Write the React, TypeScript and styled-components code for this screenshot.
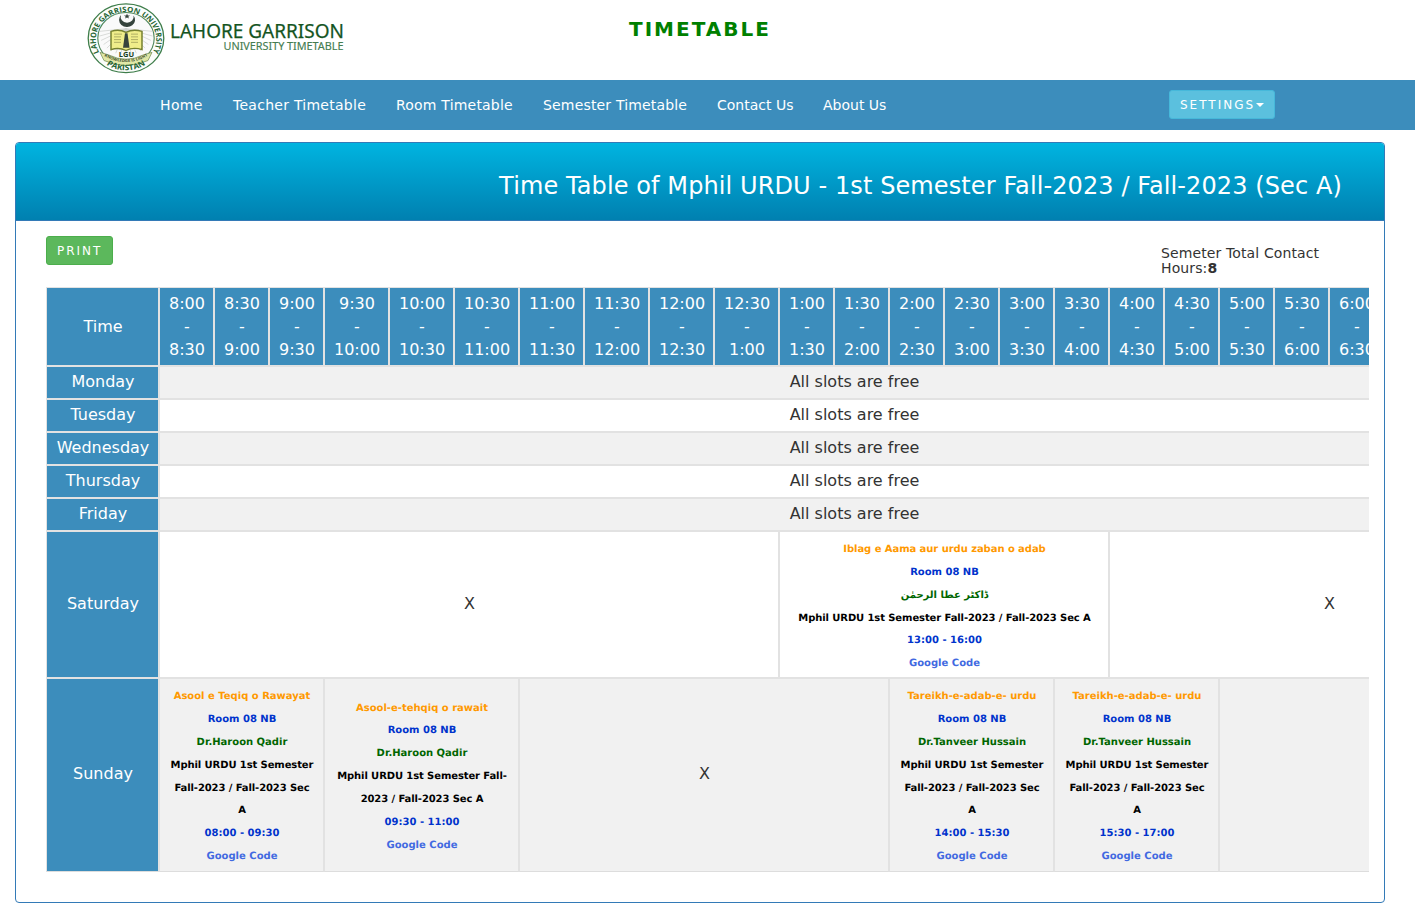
import React from "react";
import styled, { createGlobalStyle } from "styled-components";

const GlobalStyle = createGlobalStyle`
  * { box-sizing: border-box; }
  html { overflow: hidden; }
  body {
    margin: 0;
    background: #fff;
    color: #333;
    font: 14px/1.42857143 "DejaVu Sans", sans-serif;
  }
`;

const Masthead = styled.header`
  display: flex;
  height: 80px;
  padding-left: 85px;
`;

const LogoDrawing = styled.svg`
  flex: none;
  width: 260px;
  height: 78px;
  overflow: visible;
`;

const SiteTitle = styled.h1`
  margin: 16px 0 0 284px;
  color: #008000;
  font-size: 20px;
  line-height: 26px;
  letter-spacing: 2px;
`;

const NavBar = styled.nav`
  display: flex;
  align-items: flex-start;
  justify-content: space-between;
  height: 50px;
  padding: 10px 140px 0 160px;
  background: #3c8dbc;
`;

const NavLinks = styled.ul`
  display: flex;
  gap: 30px;
  margin: 5px 0 0;
  padding: 0;
  list-style: none;
`;

const NavItem = styled.li<{ $width: number }>`
  width: ${(p) => p.$width}px;
  white-space: nowrap;
`;

const NavLink = styled.a<{ $tracking: number }>`
  display: block;
  color: #fff;
  font-size: 14px;
  line-height: 20px;
  letter-spacing: ${(p) => p.$tracking}px;
  text-decoration: none;
`;

const Button = styled.button<{ $tone: "info" | "success"; $width: number }>`
  display: inline-flex;
  align-items: center;
  width: ${(p) => p.$width}px;
  height: 29px;
  padding: 0 10px;
  border: 1px solid ${(p) => (p.$tone === "info" ? "#46b8da" : "#4cae4c")};
  border-radius: 3px;
  background: ${(p) => (p.$tone === "info" ? "#5bc0de" : "#5cb85c")};
  color: #fff;
  font: 12px/18px "DejaVu Sans", sans-serif;
  letter-spacing: 2px;
`;

const Caret = styled.span`
  margin-left: 1px;
  border-top: 4px solid #fff;
  border-left: 4px solid transparent;
  border-right: 4px solid transparent;
`;

const Panel = styled.section`
  width: 1370px;
  height: 761px;
  margin: 12px 0 0 15px;
  border: 1px solid #337ab7;
  border-radius: 4px;
  overflow: hidden;
`;

const PanelHeading = styled.div`
  height: 78px;
  padding: 29px 42px 0 0;
  border-bottom: 1px solid #337ab7;
  background: linear-gradient(#00b4e0, #0080b0);
  color: #fff;
  text-align: right;
`;

const PanelTitle = styled.h2`
  margin: 0;
  font-size: 24px;
  font-weight: 400;
  line-height: 28px;
  letter-spacing: 0.1px;
`;

const PanelBody = styled.div`
  padding: 15px 15px 0 30px;
`;

const Toolbar = styled.div`
  display: flex;
  justify-content: space-between;
  align-items: flex-start;
  height: 51px;
`;

const ContactHours = styled.p`
  width: 208px;
  margin: 10px 0 0;
  padding-right: 30px;
  line-height: 15px;
  letter-spacing: 0.12px;
`;

const TableScroller = styled.div`
  height: 585px;
  overflow: hidden;
`;

const Schedule = styled.table`
  width: 1503px;
  border-collapse: separate;
  border-spacing: 0;
  table-layout: fixed;
  font-size: 16px;
  line-height: 1.42857143;
  text-align: center;
`;

const Column = styled.col<{ $width: number }>`
  width: ${(p) => p.$width}px;
`;

const HeadCell = styled.th`
  padding: 4px 8px 4px 9px;
  border: 1px solid #e2e2e2;
  background: #3c8dbc;
  color: #fff;
  font-weight: 400;
  white-space: nowrap;
`;

const HeadRow = styled.tr`
  height: 79px;

  ${HeadCell} {
    padding-top: 4.6px;
    padding-bottom: 3.4px;
  }
`;

const SlotCell = styled.td`
  padding: 4px 8.5px 4px 9.5px;
  border: 1px solid #e2e2e2;
`;

const DayRow = styled.tr<{ $striped: boolean; $height: number }>`
  height: ${(p) => p.$height}px;
  background: ${(p) => (p.$striped ? "#f1f1f1" : "#fff")};

  &:last-child > * {
    padding-bottom: 5px;
    border-bottom-color: #ddd;
  }
`;

const Detail = styled.span<{ $color: string; $tracking?: number }>`
  color: ${(p) => p.$color};
  font-size: 10px;
  font-weight: 700;
  letter-spacing: ${(p) => p.$tracking ?? 0}px;
  text-rendering: geometricPrecision;
`;

type Lecture = { course: string; teacher: string; time: string };
type Slot = { span: number; text?: string; lecture?: Lecture };

const marks = [
  "8:00", "8:30", "9:00", "9:30", "10:00", "10:30", "11:00", "11:30", "12:00", "12:30",
  "1:00", "1:30", "2:00", "2:30", "3:00", "3:30", "4:00", "4:30", "5:00", "5:30",
  "6:00", "6:30", "7:00", "7:30", "8:00",
];
const periods = marks.slice(0, -1).map((start, i) => ({ start, end: marks[i + 1] }));

const free: Slot[] = [{ span: 24, text: "All slots are free" }];

const days: { name: string; height: number; slots: Slot[] }[] = [
  { name: "Monday", height: 33, slots: free },
  { name: "Tuesday", height: 33, slots: free },
  { name: "Wednesday", height: 33, slots: free },
  { name: "Thursday", height: 33, slots: free },
  { name: "Friday", height: 33, slots: free },
  {
    name: "Saturday",
    height: 147,
    slots: [
      { span: 10, text: "X" },
      { span: 6, lecture: { course: "Iblag e Aama aur urdu zaban o adab", teacher: "ڈاکٹر عطا الرحمٰن", time: "13:00 - 16:00" } },
      { span: 8, text: "X" },
    ],
  },
  {
    name: "Sunday",
    height: 194,
    slots: [
      { span: 3, lecture: { course: "Asool e Teqiq o Rawayat", teacher: "Dr.Haroon Qadir", time: "08:00 - 09:30" } },
      { span: 3, lecture: { course: "Asool-e-tehqiq o rawait", teacher: "Dr.Haroon Qadir", time: "09:30 - 11:00" } },
      { span: 6, text: "X" },
      { span: 3, lecture: { course: "Tareikh-e-adab-e- urdu", teacher: "Dr.Tanveer Hussain", time: "14:00 - 15:30" } },
      { span: 3, lecture: { course: "Tareikh-e-adab-e- urdu", teacher: "Dr.Tanveer Hussain", time: "15:30 - 17:00" } },
      { span: 6, text: "X" },
    ],
  },
];

function LectureDetails({ course, teacher, time }: Lecture) {
  return (
    <>
      <Detail $color="#ff9900" $tracking={course.length > 30 ? -0.06 : 0}>{course}</Detail><br />
      <Detail $color="#0033cc">Room 08 NB</Detail><br />
      <Detail $color="#006600">{teacher}</Detail><br />
      <Detail $color="#000" $tracking={-0.1}>Mphil URDU 1st Semester Fall-2023 / Fall-2023 Sec A</Detail><br />
      <Detail $color="#0033cc">{time}</Detail><br />
      <Detail $color="#4169e1">Google Code</Detail>
    </>
  );
}

function Logo() {
  const rays = Array.from({ length: 17 }, (_, i) => {
    const a = (i / 16) * Math.PI;
    return `M41 28 L${(41 + 27 * Math.cos(a)).toFixed(1)} ${(31 + 26 * Math.sin(a)).toFixed(1)}`;
  }).join(" ");
  return (
    <LogoDrawing viewBox="0 0 260 78">
      <defs>
        <path id="rim-top" d="M15.500 56 A30.200 30.200 0 1 1 66.500 56" />
        <path id="rim-bottom" d="M17 64 A34.500 34.500 0 0 0 65 64" />
        <path id="ribbon" d="M20 58.500 Q41 71 62 58.500" />
      </defs>
      <g transform="translate(0 3.2) scale(1 .91)">
        <circle cx="41" cy="38.500" r="37.800" fill="#fbfdfb" stroke="#3e7d4a" strokeWidth="1.3" />
        <circle cx="41" cy="38.500" r="28.200" fill="#fafafa" stroke="#4d8558" strokeWidth="1.1" />
        <path d={rays} stroke="#cfd1cf" strokeWidth="0.8" />
        <path d="M36 13 A8 8 0 1 0 48.500 13.500 A6.500 6.500 0 1 1 36 13Z" fill="#35433c" />
        <path d="M42 11.500 l.9 2 2.1.1 -1.7 1.3 .6 2 -1.9-1.2 -1.9 1.2 .6-2 -1.7-1.3 2.1-.1z" fill="#35433c" />
        <path d="M26 31 Q34 28 41 32 Q48 28 57 31 V51 Q48 48 41 52 Q34 48 26 51Z" fill="#f0ed8a" stroke="#76802f" strokeWidth="1.5" />
        <path d="M29 34h8M29 37h7M29 40h7M29 43h7M46 34h7M46 37h7M46 40h7M46 43h7" stroke="#a5a45d" strokeWidth="0.9" />
        <path d="M40 33h2.500l2 16H38Z" fill="#38443c" />
        <path d="M15 54 L24 57 Q41 66 58 57 L67 54 L63 63 Q41 74 19 63Z" fill="#e0e7a6" stroke="#799059" strokeWidth="0.8" />
        <text x="41.500" y="58.800" textAnchor="middle" fontFamily="Open Sans, sans-serif" fontWeight="700" fontSize="7.500" fill="#173f20">LGU</text>
        <text fontFamily="Open Sans, sans-serif" fontWeight="700" fontSize="4.300" fill="#3c4d2c">
          <textPath href="#ribbon" startOffset="50%" textAnchor="middle">KNOWLEDGE IS LIGHT</textPath>
        </text>
        <text fontFamily="Open Sans, sans-serif" fontWeight="700" fontSize="7.900" fill="#246332">
          <textPath href="#rim-top" startOffset="50%" textAnchor="middle">LAHORE GARRISON UNIVERSITY</textPath>
        </text>
        <text fontFamily="Open Sans, sans-serif" fontWeight="700" fontSize="8.400" fill="#246332">
          <textPath href="#rim-bottom" startOffset="50%" textAnchor="middle">PAKISTAN</textPath>
        </text>
      </g>
      <text x="85" y="38" textLength="174" lengthAdjust="spacingAndGlyphs" fontFamily="Noto Sans, sans-serif" fontSize="20" fill="#14551f" stroke="#14551f" strokeWidth="0.25">LAHORE GARRISON</text>
      <text x="138.500" y="50" textLength="120" lengthAdjust="spacingAndGlyphs" fontFamily="Noto Sans, sans-serif" fontSize="11.500" fill="#457c50" stroke="#457c50" strokeWidth="0.15">UNIVERSITY TIMETABLE</text>
    </LogoDrawing>
  );
}

const links = [
  { label: "Home", width: 43, tracking: 0.35 },
  { label: "Teacher Timetable", width: 133, tracking: 0.27 },
  { label: "Room Timetable", width: 117, tracking: 0.2 },
  { label: "Semester Timetable", width: 144, tracking: 0.17 },
  { label: "Contact Us", width: 76, tracking: 0 },
  { label: "About Us", width: 63, tracking: 0 },
];

export default function App() {
  return (
    <>
      <GlobalStyle />
      <Masthead>
        <Logo />
        <SiteTitle>TIMETABLE</SiteTitle>
      </Masthead>
      <NavBar>
        <NavLinks>
          {links.map(({ label, width, tracking }) => (
            <NavItem key={label} $width={width}><NavLink href="#" $tracking={tracking}>{label}</NavLink></NavItem>
          ))}
        </NavLinks>
        <Button $tone="info" $width={106}>SETTINGS<Caret /></Button>
      </NavBar>
      <Panel>
        <PanelHeading>
          <PanelTitle>Time Table of Mphil URDU - 1st Semester Fall-2023 / Fall-2023 (Sec A)</PanelTitle>
        </PanelHeading>
        <PanelBody>
          <Toolbar>
            <Button $tone="success" $width={67}>PRINT</Button>
            <ContactHours>Semeter Total Contact Hours:<b>8</b></ContactHours>
          </Toolbar>
          <TableScroller>
            <Schedule>
              <colgroup>
                <Column $width={113} />
                {periods.map(({ start, end }, i) => (
                  <Column key={i} $width={Math.max(start.length, end.length) > 4 ? 65 : 55} />
                ))}
              </colgroup>
              <thead>
                <HeadRow>
                  <HeadCell>Time</HeadCell>
                  {periods.map(({ start, end }, i) => (
                    <HeadCell key={i}>{start}<br />-<br />{end}</HeadCell>
                  ))}
                </HeadRow>
              </thead>
              <tbody>
                {days.map((day, i) => (
                  <DayRow key={day.name} $striped={i % 2 === 0} $height={day.height}>
                    <HeadCell>{day.name}</HeadCell>
                    {day.slots.map((slot, j) => (
                      <SlotCell key={j} colSpan={slot.span}>
                        {slot.lecture ? <LectureDetails {...slot.lecture} /> : slot.text}
                      </SlotCell>
                    ))}
                  </DayRow>
                ))}
              </tbody>
            </Schedule>
          </TableScroller>
        </PanelBody>
      </Panel>
    </>
  );
}
